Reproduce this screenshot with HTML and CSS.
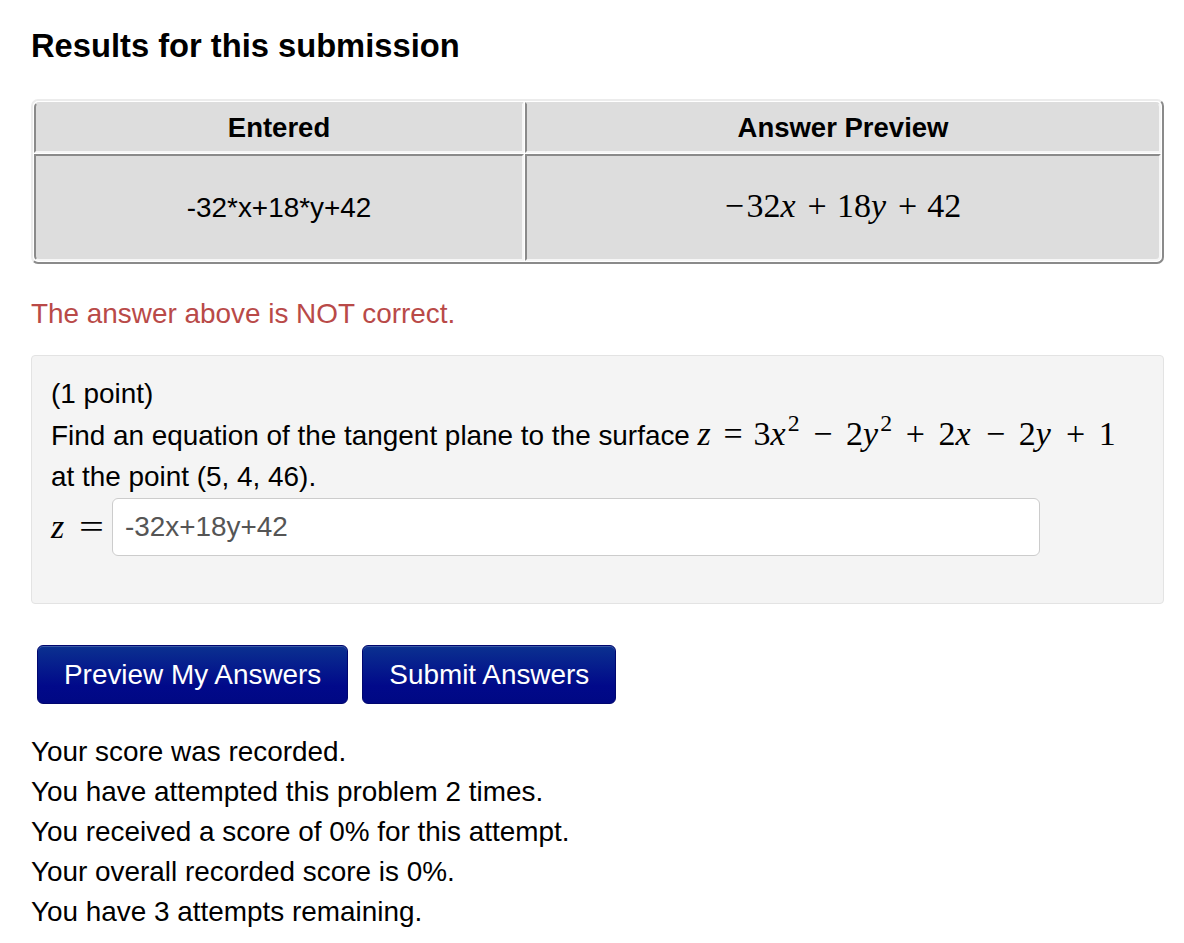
FILE: index.html
```html
<!DOCTYPE html>
<html>
<head>
<meta charset="utf-8">
<link rel="stylesheet" href="styles.css">
</head>
<body>
<div class="page">
  <h2 class="title">Results for this submission</h2>
  <table class="results">
    <colgroup><col class="col-entered"><col class="col-preview"></colgroup>
    <tr>
      <th class="th-first">Entered</th>
      <th class="th-last">Answer Preview</th>
    </tr>
    <tr>
      <td class="td-first">-32*x+18*y+42</td>
      <td class="td-last"><span class="math"><span class="mo-unary">−</span>32<i class="mi">x</i><span class="bin">+</span>18<i class="mi">y</i><span class="bin">+</span>42</span></td>
    </tr>
  </table>
  <p class="error">The answer above is NOT correct.</p>
  <div class="problem">
    <div class="line first">(1 point)</div>
    <div class="line">Find an equation of the tangent plane to the surface <span class="math eq"><i class="mi">z</i><span class="rel">=</span>3<i class="mi">x</i><sup class="sup">2</sup><span class="bin">−</span>2<i class="mi">y</i><sup class="sup">2</sup><span class="bin">+</span>2<i class="mi">x</i><span class="bin">−</span>2<i class="mi">y</i><span class="bin">+</span>1</span></div>
    <div class="line">at the point (5, 4, 46).</div>
    <div class="answer-row">
      <span class="math label"><i class="mi">z</i><span class="rel">=</span></span>
      <input class="answer" type="text" value="-32x+18y+42">
    </div>
  </div>
  <div class="buttons">
    <button class="btn">Preview My Answers</button>
    <button class="btn">Submit Answers</button>
  </div>
  <div class="status">
    <div>Your score was recorded.</div>
    <div>You have attempted this problem 2 times.</div>
    <div>You received a score of 0% for this attempt.</div>
    <div>Your overall recorded score is 0%.</div>
    <div>You have 3 attempts remaining.</div>
  </div>
</div>
</body>
</html>
```
FILE: styles.css
```css
html, body {
  margin: 0;
  padding: 0;
  background: #fff;
}
body {
  font-family: "Liberation Sans", Arial, sans-serif;
  font-size: 27.9px;
  line-height: 40px;
  color: #000;
}
.page {
  padding: 26px 20px 0 31px;
  width: 1133px;
}
.title {
  margin: 0 0 33px 0;
  font-size: 32.7px;
  line-height: 40px;
  font-weight: bold;
}
.results {
  width: 1133px;
  border: 2px solid;
  border-color: #ececec #8a8a8a #8a8a8a #ececec;
  border-radius: 7px;
  border-spacing: 1px;
  table-layout: fixed;
}
.col-entered { width: 490px; }
.results th, .results td {
  background: #dddddd;
  text-align: center;
  border: 2px solid;
  border-color: #8a8a8a #f6f6f6 #f6f6f6 #8a8a8a;
  padding: 0;
}
.results th {
  height: 47px;
  font-weight: bold;
  font-size: 27.5px;
  line-height: 38px;
  border-top-color: #dddddd;
}
.results td {
  height: 103px;
}
.th-first { border-top-left-radius: 5px; }
.th-last { border-top-right-radius: 5px; }
.td-first { border-bottom-left-radius: 5px; }
.td-last { border-bottom-right-radius: 5px; }
.math {
  font-family: "Liberation Serif", "Times New Roman", serif;
  font-size: 34px;
  line-height: 1;
  white-space: nowrap;
}
.mi {
  font-style: italic;
  padding-right: 0.05em;
}
.mo-unary {
  margin-right: 0.08em;
}
.bin {
  margin: 0 0.3em;
}
.eq .bin {
  margin: 0 0.4em;
}
.rel {
  margin: 0 0.32em;
}
.sup {
  font-size: 0.7em;
  line-height: 0;
  position: relative;
  top: -0.58em;
  vertical-align: baseline;
  margin-left: 0.02em;
}
.error {
  margin: 30px 0 21px 0;
  color: #b94a48;
}
.problem {
  background: #f4f4f4;
  border: 1px solid #e3e3e3;
  border-radius: 4px;
  padding: 17px 19px 47px 19px;
}
.line {
  line-height: 41px;
}
.line.first {
  line-height: 42px;
}
.answer-row {
  display: flex;
  align-items: center;
  height: 59px;
}
.label .rel {
  margin: 0 0 0 0.38em;
  display: inline-block;
  transform: scaleX(1.3);
  transform-origin: left center;
}
.answer {
  margin-left: 14px;
  width: 928px;
  height: 58px;
  box-sizing: border-box;
  border: 1px solid #cccccc;
  border-radius: 6px;
  padding: 0 12px;
  font-family: "Liberation Sans", Arial, sans-serif;
  font-size: 27.9px;
  color: #555;
  background: #fff;
}
.buttons {
  display: flex;
  gap: 14px;
  margin: 41px 0 0 6px;
}
.btn {
  font-family: "Liberation Sans", Arial, sans-serif;
  font-size: 27.9px;
  line-height: 39px;
  padding: 9px 26px;
  color: #fff;
  border: 1px solid #00066e;
  border-radius: 6px;
  background: linear-gradient(#0b3190, #01098a 70%, #000884);
  box-shadow: inset 0 1px 0 rgba(255,255,255,0.2);
}
.status {
  margin-top: 28px;
}
```
